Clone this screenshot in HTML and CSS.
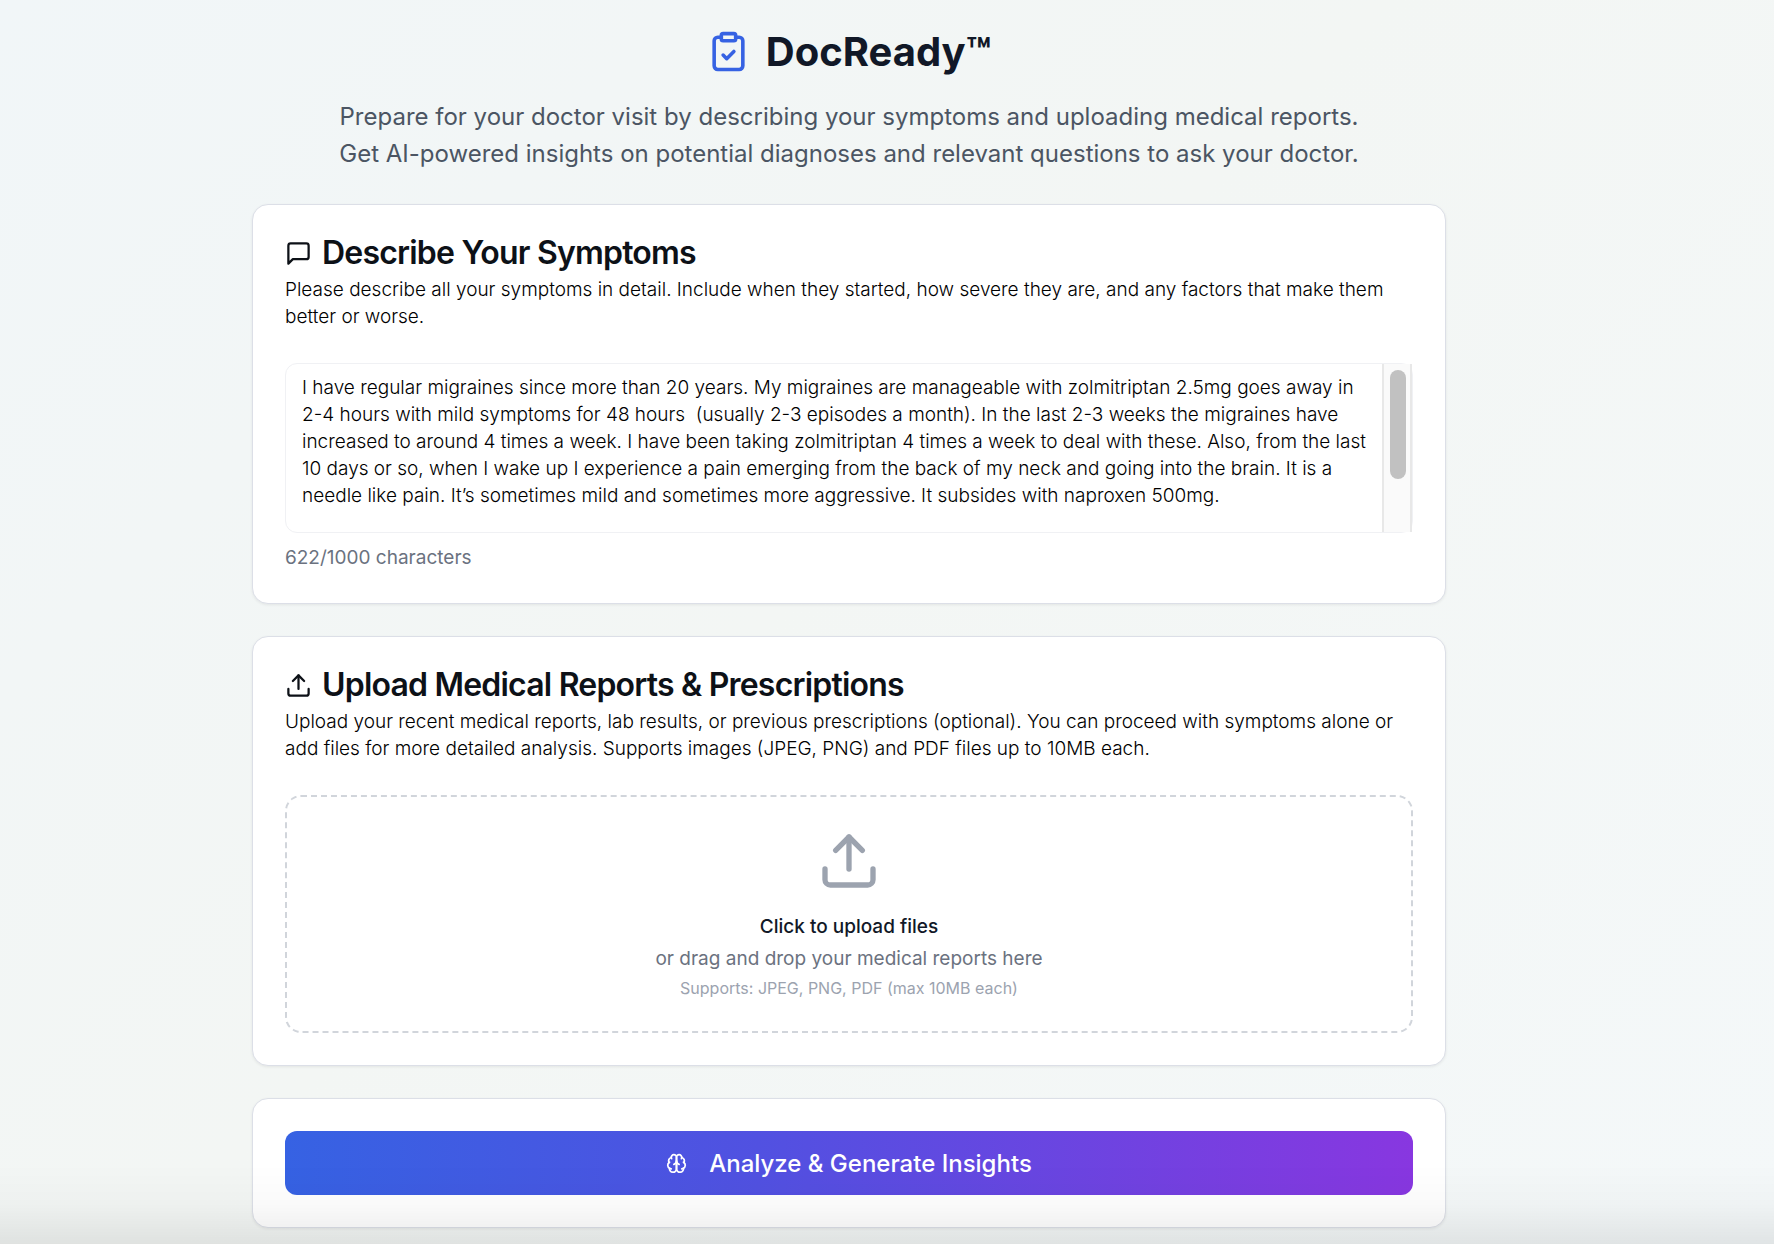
FILE: index.html
```html
<!DOCTYPE html>
<html lang="en">
  <head>
    <meta charset="UTF-8" />
    <meta name="viewport" content="width=device-width, initial-scale=1.0" />
    <title>DocReady</title>
    <link rel="stylesheet" href="styles.css">
  </head>
  <body>
    <div class="container">
      <header class="header">
        <div class="brand">
          <svg class="brand-icon" viewBox="0 0 24 24">
            <rect width="8" height="4" x="8" y="2" rx="1" ry="1" />
            <path d="M16 4h2a2 2 0 0 1 2 2v14a2 2 0 0 1-2 2H6a2 2 0 0 1-2-2V6a2 2 0 0 1 2-2h2" />
            <path d="m9 14 2 2 4-4" />
          </svg>
          <h1>DocReady™</h1>
        </div>
        <p class="tagline">
          Prepare for your doctor visit by describing your symptoms and uploading medical reports.<br />
          Get AI-powered insights on potential diagnoses and relevant questions to ask your doctor.
        </p>
      </header>

      <main class="cards">
        <section class="card">
          <h2 class="card-title">
            <svg class="title-icon" viewBox="0 0 24 24">
              <path d="M21 15a2 2 0 0 1-2 2H7l-4 4V5a2 2 0 0 1 2-2h14a2 2 0 0 1 2 2z" />
            </svg>
            <label for="symptoms">Describe Your Symptoms</label>
          </h2>
          <p class="card-text">
            Please describe all your symptoms in detail. Include when they started, how severe they are, and any factors that make them better or worse.
          </p>
          <div class="symptoms-box">
            <textarea id="symptoms" class="symptoms" maxlength="1000">I have regular migraines since more than 20 years. My migraines are manageable with zolmitriptan 2.5mg goes away in
2-4 hours with mild symptoms for 48 hours  (usually 2-3 episodes a month). In the last 2-3 weeks the migraines have increased to around 4 times a week. I have been taking zolmitriptan 4 times a week to deal with these. Also, from the last 10 days or so, when I wake up I experience a pain emerging from the back of my neck and going into the brain. It is a needle like pain. It’s sometimes mild and sometimes more aggressive. It subsides with naproxen 500mg.</textarea>
            <span class="scroll-track" aria-hidden="true"><span class="scroll-thumb"></span></span>
          </div>
          <p class="counter">622/1000 characters</p>
        </section>

        <section class="card">
          <h2 class="card-title">
            <svg class="title-icon" viewBox="0 0 24 24">
              <path d="M21 15v4a2 2 0 0 1-2 2H5a2 2 0 0 1-2-2v-4" />
              <path d="m17 8-5-5-5 5" />
              <path d="M12 3v12" />
            </svg>
            Upload Medical Reports &amp; Prescriptions
          </h2>
          <p class="card-text">
            Upload your recent medical reports, lab results, or previous prescriptions (optional). You can proceed with symptoms alone or add files for more detailed analysis. Supports images (JPEG, PNG) and PDF files up to 10MB each.
          </p>
          <button type="button" class="dropzone">
            <svg class="drop-icon" viewBox="0 0 24 24">
              <path d="M21 15v4a2 2 0 0 1-2 2H5a2 2 0 0 1-2-2v-4" />
              <path d="m17 8-5-5-5 5" />
              <path d="M12 3v12" />
            </svg>
            <span class="drop-title">Click to upload files</span>
            <span class="drop-text">or drag and drop your medical reports here</span>
            <span class="drop-hint">Supports: JPEG, PNG, PDF (max 10MB each)</span>
          </button>
        </section>

        <section class="card">
          <button type="button" class="analyze">
            <svg class="analyze-icon" viewBox="0 0 24 24">
              <path d="M12 5a3 3 0 1 0-5.997.125 4 4 0 0 0-2.526 5.77 4 4 0 0 0 .556 6.588A4 4 0 1 0 12 18Z" />
              <path d="M12 5a3 3 0 1 1 5.997.125 4 4 0 0 1 2.526 5.77 4 4 0 0 1-.556 6.588A4 4 0 1 1 12 18Z" />
              <path d="M15 13a4.5 4.5 0 0 1-3-4 4.5 4.5 0 0 1-3 4" />
              <path d="M17.599 6.5a3 3 0 0 0 .399-1.375" />
              <path d="M6.003 5.125A3 3 0 0 0 6.401 6.5" />
              <path d="M3.477 10.896a4 4 0 0 1 .585-.396" />
              <path d="M19.938 10.5a4 4 0 0 1 .585.396" />
              <path d="M6 18a4 4 0 0 1-1.967-.516" />
              <path d="M19.967 17.484A4 4 0 0 1 18 18" />
            </svg>
            Analyze &amp; Generate Insights
          </button>
        </section>
      </main>
    </div>
  </body>
</html>
```

FILE: styles.css
```css
* {
  box-sizing: border-box;
}

body {
  margin: 0;
  padding: 30px 76px 16px 0;
  min-height: 100vh;
  font-family: "Inter", sans-serif;
  font-size: 19px;
  line-height: 27px;
  color: #0d1117;
  background: linear-gradient(135deg, #f1f6f8, #f3f6f4 46%, #f4f8f9);
}

/* soft shade along the bottom of the window */
body::after {
  content: "";
  position: fixed;
  left: 0;
  right: 0;
  bottom: 0;
  height: 80px;
  background: linear-gradient(to bottom, rgba(0, 0, 0, 0), rgba(0, 0, 0, 0.02) 50%, rgba(0, 0, 0, 0.08));
  pointer-events: none;
}

h1,
h2,
p {
  margin: 0;
}

svg {
  flex-shrink: 0;
  fill: none;
  stroke: currentColor;
  stroke-width: 2;
  stroke-linecap: round;
  stroke-linejoin: round;
}

.container {
  max-width: 1194px;
  margin: 0 auto;
}

.header {
  margin-bottom: 32px;
  text-align: center;
}

.brand {
  display: flex;
  justify-content: center;
  align-items: center;
  gap: 16px;
  margin-bottom: 25px;
}

.brand h1 {
  font-size: 40px;
  line-height: 43px;
  font-weight: 700;
  color: #111827;
}

.brand-icon {
  width: 43px;
  height: 43px;
  color: #3662e3;
}

.tagline {
  font-size: 24px;
  line-height: 37px;
  color: #4b5563;
}

.cards {
  display: flex;
  flex-direction: column;
  gap: 32px;
}

.card {
  padding: 32px;
  background: #fff;
  border: 1px solid #dcdfe7;
  border-radius: 16px;
  box-shadow: 0 1px 3px rgba(0, 0, 0, 0.07);
}

.card-title {
  display: flex;
  align-items: center;
  gap: 10px;
  margin-bottom: 7px;
  font-size: 32px;
  line-height: 32px;
  font-weight: 600;
  letter-spacing: -0.025em;
}

.title-icon {
  width: 27px;
  height: 27px;
}

.card-text {
  margin-bottom: 33px;
  font-weight: 300;
  color: #000;
}

.symptoms-box {
  position: relative;
}

.symptoms {
  display: block;
  width: 100%;
  height: 170px;
  padding: 10px 36px 10px 16px;
  border: 1px solid #f0f1f4;
  border-radius: 12px;
  background: #fff;
  color: #000;
  font: inherit;
  font-weight: 300;
  resize: none;
}

/* scrollbar over the right edge of the text box */
.scroll-track {
  position: absolute;
  top: 1px;
  right: 1px;
  bottom: 1px;
  width: 30px;
  padding: 6px 4px 6px 6px;
  background: #fafafa;
  border: solid #e8e8e8;
  border-width: 0 2px;
}

.scroll-thumb {
  display: block;
  height: 70%;
  border-radius: 8px;
  background: #c1c1c1;
}

.counter {
  margin-top: 11px;
  color: #6b7280;
}

.dropzone {
  display: flex;
  flex-direction: column;
  align-items: center;
  gap: 5px;
  width: 100%;
  padding: 32px;
  background: #fff;
  border: 2px dashed #d1d5db;
  border-radius: 16px;
  font: inherit;
  cursor: pointer;
}

.drop-icon {
  width: 64px;
  height: 64px;
  margin-bottom: 15px;
  color: #9ca3af;
}

.drop-title {
  font-weight: 500;
  color: #111827;
}

.drop-text {
  color: #6b7280;
}

.drop-hint {
  font-size: 16px;
  line-height: 22px;
  color: #9ca3af;
}

.analyze {
  display: flex;
  justify-content: center;
  align-items: center;
  gap: 22px;
  width: 100%;
  height: 64px;
  border: none;
  border-radius: 12px;
  background: linear-gradient(to right, #3662e3, #5151e1 42%, #8837e0);
  color: #fff;
  font: inherit;
  font-size: 24px;
  font-weight: 500;
  cursor: pointer;
}

.analyze-icon {
  width: 21px;
  height: 21px;
}
```
